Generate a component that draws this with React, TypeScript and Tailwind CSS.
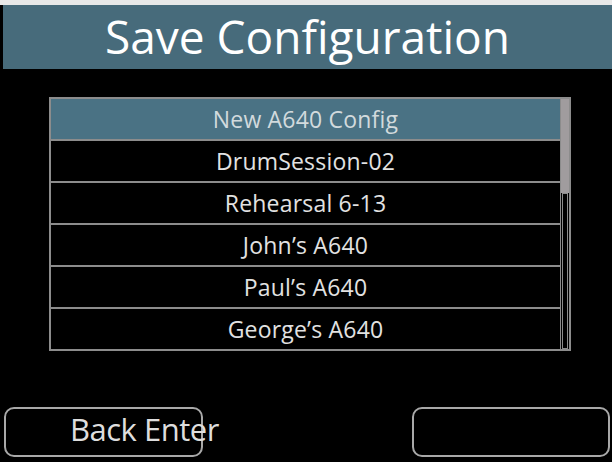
import React from 'react'

const CONFIGS = [
  'New A640 Config',
  'DrumSession-02',
  'Rehearsal 6-13',
  'John’s A640',
  'Paul’s A640',
  'George’s A640',
]

const font = { fontFamily: '"Open Sans", "Noto Sans", sans-serif' }

function ConfigRow({ name, selected, last }: { name: string; selected: boolean; last: boolean }) {
  return (
    <div
      className={
        'flex items-center justify-center text-[23px] tracking-[0.2px] ' +
        (last ? 'h-[40px] ' : 'h-[42px] border-b-2 border-[#8c8c8c] ') +
        (selected ? 'bg-[#4a7284] text-[#d2dadd]' : 'bg-black text-[#e2e2e2]')
      }
    >
      {name}
    </div>
  )
}

export default function App() {
  const selected = 0

  return (
    <div className="w-[612px] h-[462px] bg-black flex flex-col overflow-hidden" style={font}>
      {/* top edge of the screen bezel */}
      <div className="h-[5px] bg-[#e8e8e8] shrink-0" />

      <div className="h-[64px] ml-[3px] bg-[#476b7b] flex items-center justify-center shrink-0">
        <h1 className="text-[46px] leading-none text-white -mt-[2px]">Save Configuration</h1>
      </div>

      {/* config list */}
      <div className="ml-[49px] mt-[28px] w-[522px] border-2 border-[#8c8c8c] flex">
        <div className="flex-1 flex flex-col border-r border-[#8c8c8c]">
          {CONFIGS.map((name, i) => (
            <ConfigRow key={name} name={name} selected={i === selected} last={i === CONFIGS.length - 1} />
          ))}
        </div>
        <div className="w-[8px] flex flex-col">
          <div className="h-[94px] bg-[#a09c9e]" />
          <div className="flex-1 mx-[1px] border border-[#8c8c8c]" />
        </div>
      </div>

      {/* soft keys */}
      <div className="mt-[56px] flex justify-between pl-[4px] pr-[2px]">
        <div className="relative w-[199px] h-[50px] rounded-[10px] border-2 border-[#a8a8a8]">
          <span className="absolute left-[64px] top-[5px] text-[31px] leading-none text-[#dedede] whitespace-nowrap tracking-[-0.5px]">
            Back Enter
          </span>
        </div>
        <div className="w-[198px] h-[50px] rounded-[10px] border-2 border-[#a8a8a8]" />
      </div>
    </div>
  )
}
